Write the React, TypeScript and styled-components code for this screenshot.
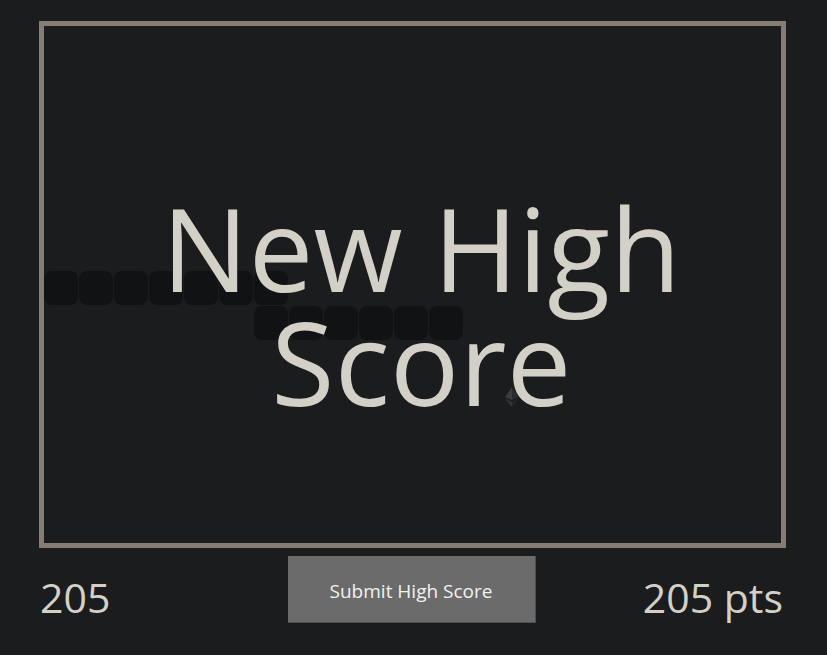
import React from "react";
import styled, { createGlobalStyle } from "styled-components";

const Global = createGlobalStyle`
  html, body {
    margin: 0;
    padding: 0;
    background: #1b1c1e;
  }
  body {
    font-family: "Open Sans", "Noto Sans", sans-serif;
  }
`;

const Page = styled.div`
  width: 747px;
  padding: 21px 0 0 39px;
  display: flex;
  flex-direction: column;
  gap: 8px;
`;

const Board = styled.div`
  position: relative;
  box-sizing: border-box;
  height: 527px;
  border: 5px solid #857c72;
  padding: 165px 0 0 18px;
  overflow: hidden;
`;

const Segment = styled.div`
  position: absolute;
  width: 34px;
  height: 34px;
  border-radius: 8px;
  background: #111214;
`;

const Food = styled.svg`
  position: absolute;
  left: 461px;
  top: 361px;
`;

const Title = styled.h1`
  position: relative;
  margin: 0;
  font-family: "Open Sans", "Noto Sans", sans-serif;
  font-weight: 400;
  font-size: 115px;
  line-height: 114px;
  letter-spacing: 0.3px;
  text-align: center;
  color: #d3d0c8;
`;

const Footer = styled.div`
  display: flex;
  align-items: center;
  justify-content: space-between;
  height: 67px;
`;

const Stat = styled.span<{ $align: "left" | "right" }>`
  font-family: "Open Sans", "Noto Sans", sans-serif;
  font-size: 41px;
  color: #d3d0c8;
  width: 200px;
  margin-top: 14px;
  text-align: ${(p) => p.$align};
  padding: ${(p) => (p.$align === "left" ? "0 0 0 1px" : "0 3px 0 0")};
  box-sizing: border-box;
`;

const SubmitButton = styled.button`
  box-sizing: border-box;
  width: 248px;
  height: 67px;
  margin-left: -2px;
  background: #6b6b6b;
  border: none;
  border-right: 1px solid #4e4e4e;
  border-bottom: 1px solid #4e4e4e;
  color: #f2f2f2;
  font-family: "Open Sans", "Noto Sans", sans-serif;
  font-size: 19px;
  padding: 3px 0 0;
  cursor: pointer;
`;

const snake: Array<[number, number]> = [
  [0, 245], [35, 245], [70, 245], [105, 245], [140, 245], [175, 245], [210, 245],
  [210, 280], [245, 280], [280, 280], [315, 280], [350, 280], [385, 280],
];

export default function App() {
  return (
    <>
      <Global />
      <Page>
        <Board>
          {snake.map(([x, y], i) => (
            <Segment key={i} style={{ left: x, top: y }} />
          ))}
          <Food width="14" height="20" viewBox="0 0 14 20">
            <polygon points="7,0 0,10 7,13" fill="#3d3d3f" />
            <polygon points="7,0 14,10 7,13" fill="#2c2c2e" />
            <polygon points="0,11.5 7,15 7,20" fill="#353537" />
            <polygon points="14,11.5 7,15 7,20" fill="#262628" />
          </Food>
          <Title>
            New High
            <br />
            Score
          </Title>
        </Board>
        <Footer>
          <Stat $align="left">205</Stat>
          <SubmitButton>Submit High Score</SubmitButton>
          <Stat $align="right">205 pts</Stat>
        </Footer>
      </Page>
    </>
  );
}
